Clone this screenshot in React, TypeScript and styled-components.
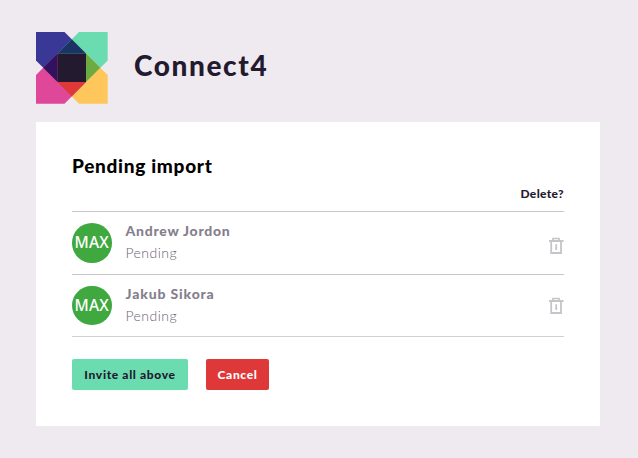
import React from "react";
import styled, { createGlobalStyle } from "styled-components";

const GlobalStyle = createGlobalStyle`
  * { box-sizing: border-box; }
  body {
    margin: 0;
    background: #efeaef;
    color: #231a2f;
    font-family: Lato, "Open Sans", sans-serif;
  }
`;

const Page = styled.main`
  width: 638px;
  height: 458px;
  padding: 32px 38px 0 36px;
  background: #efeaef;
`;

const Header = styled.header`
  display: flex;
  align-items: center;
  gap: 26px;
  height: 72px;
  margin-bottom: 18px;
`;

const Brand = styled.h1`
  margin: 0;
  padding-bottom: 6px;
  font-size: 28px;
  line-height: 36px;
  font-weight: 900;
  letter-spacing: 1.6px;
`;

const Card = styled.section`
  height: 304px;
  padding: 32px 36px 0;
  background: #fff;
`;

const Title = styled.h2`
  margin: 0;
  color: #000;
  font-size: 19px;
  line-height: 24px;
  font-weight: 900;
  letter-spacing: 0.7px;
`;

const ColumnHead = styled.div`
  display: flex;
  justify-content: flex-end;
  height: 33px;
  padding-top: 8px;
  font-size: 12px;
  line-height: 16px;
  font-weight: 900;
  letter-spacing: 0.35px;
`;

const List = styled.ul`
  margin: 0;
  padding: 0;
  list-style: none;
`;

const Row = styled.li<{ $last?: boolean }>`
  display: flex;
  height: ${(p) => (p.$last ? 63.4 : 62.6)}px;
  padding-top: 11px;
  border-top: 1px solid #c8c5cb;
  border-bottom: ${(p) => (p.$last ? "1px solid #d2cfd4" : "0")};
`;

const Avatar = styled.div`
  display: flex;
  align-items: center;
  justify-content: center;
  width: 39.5px;
  height: 39.5px;
  margin-right: 14px;
  border-radius: 50%;
  background: #3fa940;
  color: #fff;
  font: 500 15.5px/38px "Noto Sans", sans-serif;
  letter-spacing: 0.2px;
  padding-bottom: 1px;
`;

const Person = styled.div`
  flex: 1;
  color: #857f8d;
`;

const Name = styled.div<{ $spacing: number }>`
  height: 22px;
  margin-top: -2px;
  font-size: 14px;
  line-height: 20px;
  font-weight: 900;
  letter-spacing: ${(p) => p.$spacing}px;
`;

const Status = styled.div`
  color: #6b6475;
  font-size: 14px;
  line-height: 20px;
  font-weight: 300;
  letter-spacing: 0.45px;
`;

const DeleteButton = styled.button<{ $top: number }>`
  align-self: flex-start;
  width: 16px;
  height: 18px;
  margin-top: ${(p) => p.$top}px;
  padding: 0;
  border: 0;
  background: none;
  svg { display: block; }
`;

const Actions = styled.div`
  display: flex;
  gap: 18px;
  margin-top: 22px;
`;

const Button = styled.button<{ $width: number; $danger?: boolean }>`
  width: ${(p) => p.$width}px;
  height: 31.4px;
  padding: 0;
  border: 0;
  border-radius: 2px;
  background: ${(p) => (p.$danger ? "#de3838" : "#6bdcb0")};
  color: ${(p) => (p.$danger ? "#fff" : "#231a2f")};
  font: 900 12px/31px Lato, sans-serif;
  letter-spacing: 0.65px;
  white-space: nowrap;
`;

const Logo = () => (
  <svg width="72" height="72" viewBox="0 0 72 72" aria-hidden="true">
    <path d="M0 0H28.5L50 21.5L21.5 50L0 28.5Z" fill="#393896" />
    <path d="M43 0H71.7V28.5L50 50L21.5 21.5Z" fill="#6bdcb0" />
    <path d="M71.7 43V71.7H43L21.5 50L50 21.5Z" fill="#ffc65c" />
    <path d="M0 43V71.7H28.5L50 50L21.5 21.5Z" fill="#df4798" />
    <path d="M21.5 21.5L35.75 7.25L50 21.5Z" fill="#1c3366" />
    <path d="M21.5 21.5L7.25 35.75L21.5 50Z" fill="#32125f" />
    <path d="M50 21.5L64.25 35.75L50 50Z" fill="#6cab42" />
    <path d="M21.5 50L35.75 64.25L50 50Z" fill="#de3838" />
    <path d="M21.5 21.5H50V50H21.5Z" fill="#231a2f" />
  </svg>
);

const TrashIcon = () => (
  <svg width="16" height="18" viewBox="0 0 16 18" fill="none" stroke="#c6c4c9" aria-hidden="true">
    <path d="M1 4H15.5" strokeWidth="2" />
    <path d="M5 3.5V1.5H11V3.5" strokeWidth="1.7" />
    <path d="M3.2 5V16H13V5" strokeWidth="1.8" />
    <path d="M8.2 7.2V13" strokeWidth="1.8" />
  </svg>
);

const people = [
  { name: "Andrew Jordon", spacing: 0.75, iconTop: 14 },
  { name: "Jakub Sikora", spacing: 0.85, iconTop: 11.4 },
];

export default function App() {
  return (
    <Page>
      <GlobalStyle />
      <Header>
        <Logo />
        <Brand>Connect4</Brand>
      </Header>
      <Card>
        <Title>Pending import</Title>
        <ColumnHead>Delete?</ColumnHead>
        <List>
          {people.map((person, i) => (
            <Row key={person.name} $last={i === people.length - 1}>
              <Avatar>MAX</Avatar>
              <Person>
                <Name $spacing={person.spacing}>{person.name}</Name>
                <Status>Pending</Status>
              </Person>
              <DeleteButton $top={person.iconTop} aria-label={`Delete ${person.name}`}>
                <TrashIcon />
              </DeleteButton>
            </Row>
          ))}
        </List>
        <Actions>
          <Button $width={116}>Invite all above</Button>
          <Button $width={63} $danger>Cancel</Button>
        </Actions>
      </Card>
    </Page>
  );
}
